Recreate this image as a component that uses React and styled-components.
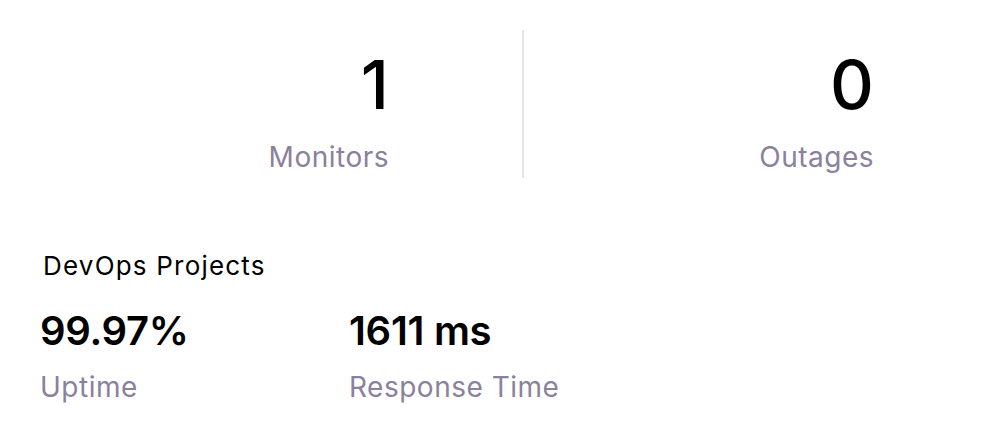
import React from 'react';
import styled, { createGlobalStyle } from 'styled-components';

const GlobalStyle = createGlobalStyle`
  body {
    margin: 0;
    background: #ffffff;
    font-family: Inter, "Noto Sans", sans-serif;
    color: #000000;
  }
`;

const totals = [
  { value: '1', label: 'Monitors', width: 522, pad: 133 },
  { value: '0', label: 'Outages', pad: 126 },
];

const project = {
  name: 'DevOps Projects',
  metrics: [
    { value: '99.97%', label: 'Uptime' },
    { value: '1611 ms', label: 'Response Time' },
  ],
};

const App = () => (
  <Page>
    <GlobalStyle />
    <Totals>
      {totals.map((t, i) => (
        <React.Fragment key={t.label}>
          {i > 0 && <Divider />}
          <TotalCell $width={t.width} $pad={t.pad}>
            <BigNumber>{t.value}</BigNumber>
            <Label>{t.label}</Label>
          </TotalCell>
        </React.Fragment>
      ))}
    </Totals>
    <Project>
      <ProjectName>{project.name}</ProjectName>
      <Metrics>
        {project.metrics.map((m) => (
          <Metric key={m.label}>
            <MetricValue>{m.value}</MetricValue>
            <Label>{m.label}</Label>
          </Metric>
        ))}
      </Metrics>
    </Project>
  </Page>
);

const Page = styled.div`
  width: 1000px;
  height: 443px;
  overflow: hidden;
`;

const Totals = styled.div`
  display: flex;
  align-items: stretch;
  margin-top: 30px;
  height: 148px;
`;

const TotalCell = styled.div`
  ${(p) => (p.$width ? `width: ${p.$width}px;` : 'flex: 1;')}
  display: flex;
  flex-direction: column;
  align-items: flex-end;
  padding-right: ${(p) => p.$pad}px;
  box-sizing: border-box;
`;

const Divider = styled.div`
  width: 1.5px;
  background: #e4e4e4;
`;

const BigNumber = styled.div`
  font-size: 68px;
  font-weight: 500;
  line-height: 82px;
  margin-top: 13px;
`;

const Label = styled.div`
  font-size: 28px;
  line-height: 34px;
  letter-spacing: 0.5px;
  color: #8b819d;
  margin-top: 15px;
`;

const Project = styled.div`
  padding: 72px 0 0 40px;
`;

const ProjectName = styled.div`
  font-size: 26px;
  line-height: 32px;
  letter-spacing: 1.2px;
  padding-left: 3px;
`;

const Metrics = styled.div`
  display: flex;
  margin-top: 25px;
`;

const Metric = styled.div`
  width: 309px;
`;

const MetricValue = styled.div`
  font-size: 40px;
  font-weight: 600;
  line-height: 48px;
  letter-spacing: -0.3px;
`;

export default App;
